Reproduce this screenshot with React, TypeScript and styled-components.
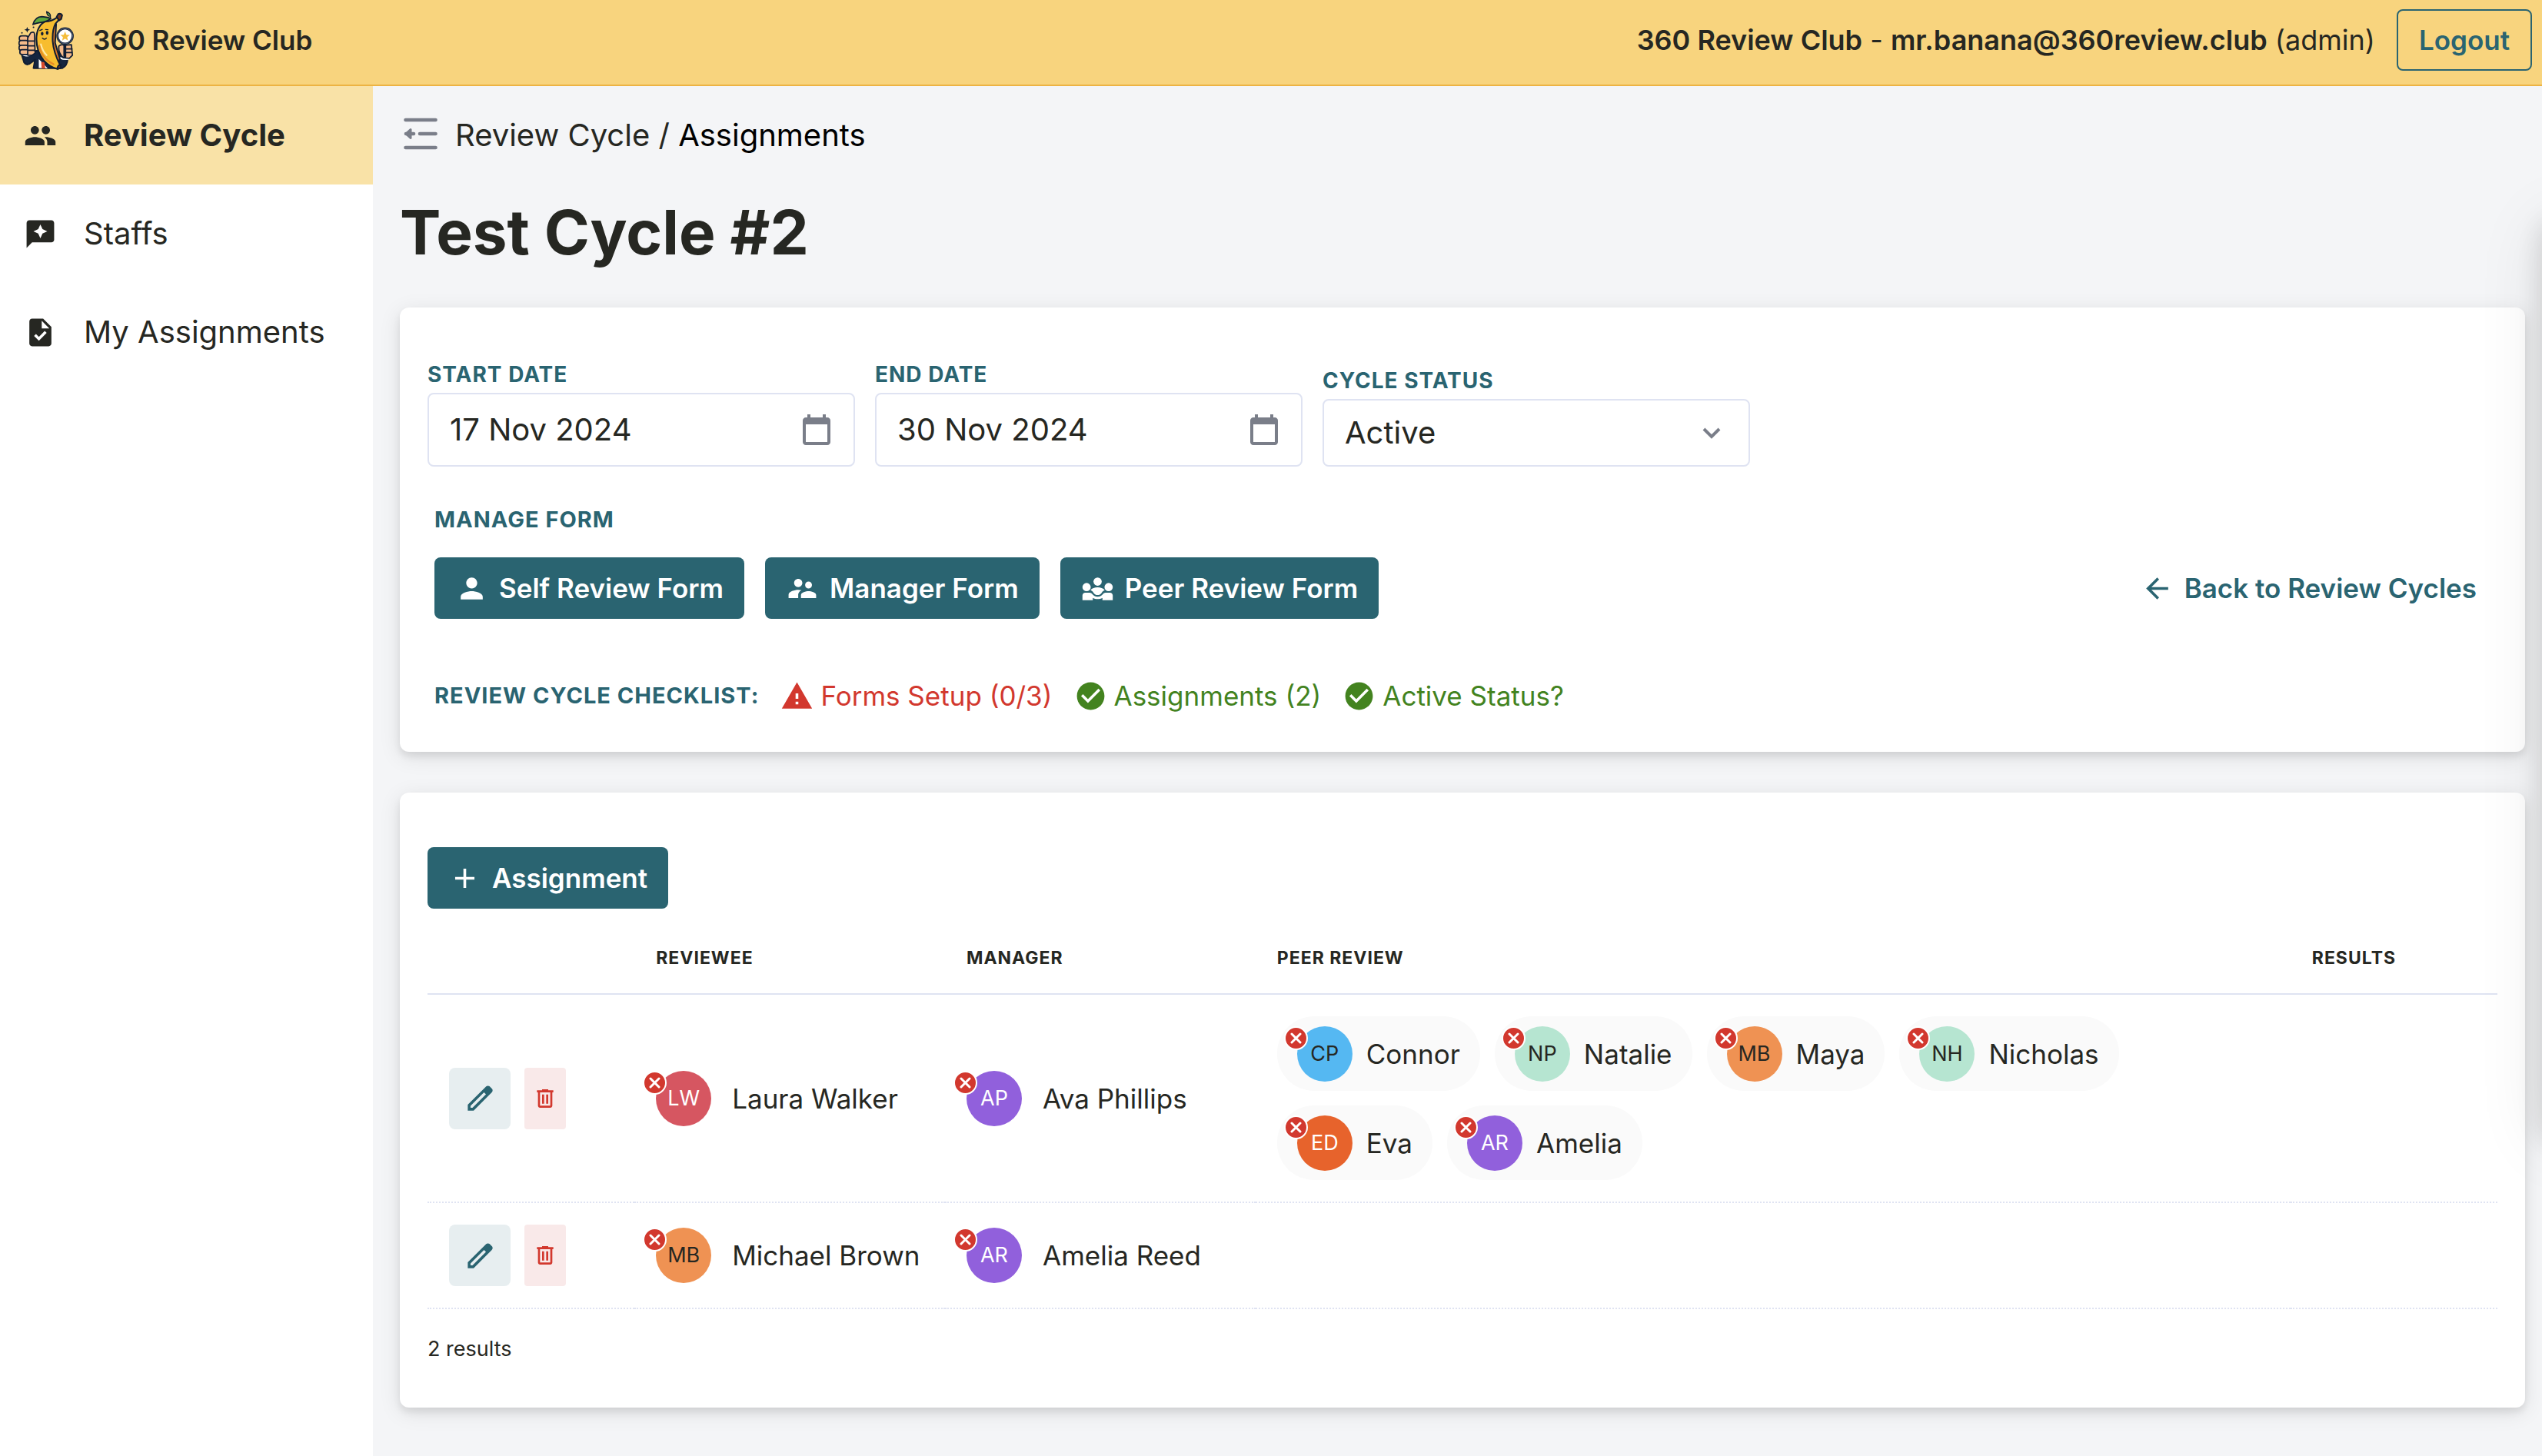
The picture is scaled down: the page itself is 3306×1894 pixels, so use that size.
import React, { useState } from "react";
import styled, { createGlobalStyle } from "styled-components";
import {
  MdPeople,
  MdReviews,
  MdTask,
  MdPerson,
  MdSupervisorAccount,
  MdArrowBack,
  MdAdd,
  MdWarning,
  MdCheckCircle,
} from "react-icons/md";

const color = {
  ink: "#262722",
  teal: "#2a6471",
  red: "#d2382e",
  green: "#43831f",
  line: "#dfe3f2",
  muted: "#7a7e89",
};

const GlobalStyle = createGlobalStyle`
  *, *::before, *::after { box-sizing: border-box; }
  body {
    margin: 0;
    overflow-x: hidden;
    background: #f4f5f7;
    color: ${color.ink};
    font-family: Inter, "Liberation Sans", sans-serif;
    font-size: 35px;
    line-height: 54px;
  }
  button, input, select { font: inherit; color: inherit; }
  a { color: inherit; text-decoration: none; }
  svg { display: block; flex: none; }
`;

const Page = styled.div`
  display: flex;
  flex-direction: column;
  min-height: 100vh;
`;

const TopBar = styled.header`
  display: flex;
  align-items: center;
  justify-content: space-between;
  height: 112px;
  padding: 0 13px 6px 22px;
  background: #f8d47e;
  border-bottom: 2px solid #edb343;
`;

const Brand = styled.a`
  display: flex;
  align-items: center;
  gap: 23px;
  font-weight: 600;
`;

const Account = styled.div`
  display: flex;
  align-items: center;
  gap: 28px;
`;

const Identity = styled.span`
  font-size: 36px;
  b { font-weight: 600; }
`;

const LogoutButton = styled.button`
  height: 80px;
  padding: 0 27px;
  border: 2px solid ${color.teal};
  border-radius: 8px;
  background: transparent;
  color: ${color.teal};
  font-weight: 600;
`;

const Body = styled.div`
  display: flex;
  flex: 1;
`;

const Sidebar = styled.nav`
  flex: none;
  width: 485px;
  background: #fff;
`;

const NavItem = styled.a<{ $active?: boolean }>`
  display: flex;
  align-items: center;
  gap: 35px;
  height: 128px;
  padding-left: 31px;
  font-size: 40px;
  font-weight: ${(p) => (p.$active ? 700 : 400)};
  background: ${(p) => (p.$active ? "#f9e2a7" : "transparent")};
`;

const Content = styled.main`
  flex: 1;
  min-width: 0;
  padding: 36px 22px 0 35px;
`;

const Crumbs = styled.div`
  display: flex;
  align-items: center;
  gap: 22px;
  height: 56px;
  padding-left: 4px;
  font-size: 40px;
`;

const FoldButton = styled.button`
  padding: 0 0 4px;
  border: 0;
  background: none;
`;

const Current = styled.span`
  color: #000;
`;

const Title = styled.h1`
  margin: 50px 0;
  font-size: 80px;
  line-height: 96px;
  font-weight: 700;
`;

const Card = styled.section`
  margin-bottom: 53px;
  padding: 71px 36px 46px;
  background: #fff;
  border-radius: 12px;
  box-shadow: 0 6px 10px rgba(0, 0, 0, 0.08), 0 6px 28px rgba(0, 0, 0, 0.1);
`;

const Fields = styled.div`
  display: flex;
  align-items: flex-end;
  gap: 26px;
`;

const Field = styled.div`
  display: flex;
  flex-direction: column;
  gap: 8px;
  width: 556px;
`;

const Caption = styled.label`
  color: ${color.teal};
  font-size: 28px;
  line-height: 32px;
  font-weight: 700;
  letter-spacing: 1px;
  text-transform: uppercase;
`;

const SectionCaption = styled.div`
  color: ${color.teal};
  font-size: 29px;
  line-height: 32px;
  font-weight: 700;
  letter-spacing: 1px;
  text-transform: uppercase;
`;

const Control = styled.div<{ $height: number }>`
  display: flex;
  align-items: center;
  height: ${(p) => p.$height}px;
  padding-right: 24px;
  border: 2px solid ${color.line};
  border-radius: 8px;
  background: #fff;
  color: ${color.muted};
  font-size: 40px;
`;

const DateInput = styled.input`
  flex: 1;
  min-width: 0;
  padding: 0 0 0 27px;
  border: 0;
  outline: 0;
  background: transparent;
  color: ${color.ink};
`;

const PickerButton = styled.button`
  padding: 0;
  border: 0;
  background: none;
`;

const StatusSelect = styled.select`
  flex: 1;
  height: 100%;
  padding: 0 0 0 27px;
  border: 0;
  outline: 0;
  appearance: none;
  background: transparent;
  color: ${color.ink};
`;

const Manage = styled.div`
  display: flex;
  flex-direction: column;
  gap: 33px;
  margin: 53px 0 73px;
  padding-left: 9px;
`;

const ButtonRow = styled.div`
  display: flex;
  align-items: center;
  gap: 27px;
`;

const Button = styled.button`
  display: inline-flex;
  align-items: center;
  gap: 14px;
  height: 80px;
  padding: 0 27px;
  border: 0;
  border-radius: 8px;
  background: ${color.teal};
  color: #fff;
  font-weight: 600;
  white-space: nowrap;
`;

const BackLink = styled.a`
  display: flex;
  align-items: center;
  gap: 14px;
  margin-left: auto;
  padding: 0 27px;
  color: ${color.teal};
  font-weight: 600;
`;

const Checklist = styled.div`
  display: flex;
  align-items: center;
  gap: 28px;
  padding-left: 9px;
`;

const Check = styled.span<{ $ok?: boolean }>`
  display: flex;
  align-items: center;
  gap: 9px;
  color: ${(p) => (p.$ok ? color.green : color.red)};
`;

const Table = styled.table`
  width: 100%;
  margin-top: 18px;
  table-layout: fixed;
  border-collapse: separate;
  border-spacing: 0;
`;

const HeadCell = styled.th<{ $width: number }>`
  width: ${(p) => p.$width}%;
  height: 94px;
  padding: 0 28px;
  border-bottom: 2px solid ${color.line};
  font-size: 23px;
  line-height: 32px;
  font-weight: 700;
  letter-spacing: 1px;
  text-align: left;
  text-transform: uppercase;
`;

const Cell = styled.td`
  padding: 28px;
  border-bottom: 2px dotted ${color.line};
  white-space: nowrap;
`;

const Actions = styled.div`
  display: flex;
  gap: 18px;
`;

const EditButton = styled.button`
  display: grid;
  place-items: center;
  width: 80px;
  height: 80px;
  padding: 0;
  border: 0;
  border-radius: 8px;
  background: #e7eef0;
  color: ${color.teal};
`;

const DeleteButton = styled(EditButton)`
  width: 54px;
  border-radius: 4px;
  background: #f9e9e9;
  color: ${color.red};
`;

const Person = styled.div<{ $chip?: boolean }>`
  display: flex;
  align-items: center;
  gap: ${(p) => (p.$chip ? 18 : 27)}px;
  height: ${(p) => (p.$chip ? "97px" : "72px")};
  padding: ${(p) => (p.$chip ? "0 26px" : "0")};
  border-radius: 48px;
  background: ${(p) => (p.$chip ? "#fafafa" : "transparent")};
`;

const Avatar = styled.span<{ $bg: string; $dark?: boolean }>`
  position: relative;
  display: grid;
  place-items: center;
  flex: none;
  width: 72px;
  height: 72px;
  border-radius: 50%;
  background: ${(p) => p.$bg};
  color: ${(p) => (p.$dark ? color.ink : "#fff")};
  font-size: 27px;
  line-height: 32px;
`;

const Badge = styled.span`
  position: absolute;
  top: 0;
  left: -17px;
  display: grid;
  place-items: center;
  width: 31px;
  height: 31px;
  border: 2px solid #fff;
  border-radius: 50%;
  background: ${color.red};
  color: #fff;
`;

const Chips = styled.div`
  display: flex;
  flex-wrap: wrap;
  gap: 19px;
`;

const Footer = styled.p`
  margin: 32px 0 10px;
  font-size: 27px;
  line-height: 40px;
`;

const Drawer = styled.aside`
  position: fixed;
  top: 290px;
  bottom: 410px;
  left: 100%;
  width: 600px;
  box-shadow: 0 0 36px rgba(0, 0, 0, 0.14), 0 0 84px rgba(0, 0, 0, 0.09);
  pointer-events: none;
`;

const ICON = 43;

const CalendarIcon = () => (
  <svg width="48" height="48" viewBox="0 -960 960 960" fill="currentColor" aria-hidden>
    <path d="M200-80q-33 0-56.5-23.5T120-160v-560q0-33 23.5-56.5T200-800h40v-80h80v80h320v-80h80v80h40q33 0 56.5 23.5T840-720v560q0 33-23.5 56.5T760-80H200Zm0-80h560v-460H200v460Z" />
  </svg>
);

const ChevronIcon = () => (
  <svg width="48" height="40" viewBox="0 0 48 40" fill="none" stroke="currentColor" strokeWidth="4" aria-hidden>
    <path d="M14 15l10 10 10-10" />
  </svg>
);

const FoldIcon = () => (
  <svg width="46" height="42" viewBox="0 0 46 42" fill="none" stroke={color.muted} strokeWidth="4.6" strokeLinecap="round" aria-hidden>
    <path d="M3.500 3H42.500M22 21H42.500M3.500 39H42.500" />
    <path d="M4 21H14" />
    <path d="M10 15.500L4 21l6 5.500z" fill={color.muted} strokeWidth="3" strokeLinejoin="round" />
  </svg>
);

const PencilIcon = () => (
  <svg width={ICON} height={ICON} viewBox="0 -960 960 960" fill="currentColor" aria-hidden>
    <path d="M200-200h57l391-391-57-57-391 391v57Zm-80 80v-170l528-527q12-11 26.500-17t30.500-6q16 0 31 6t26 18l55 56q12 11 17.500 26t5.500 30q0 16-5.500 30.500T817-647L290-120H120Z" />
  </svg>
);

const TrashIcon = () => (
  <svg width="32" height="32" viewBox="0 -960 960 960" fill="currentColor" aria-hidden>
    <path d="M280-120q-33 0-56.500-23.500T200-200v-520h-40v-80h200v-40h240v40h200v80h-40v520q0 33-23.500 56.500T680-120H280Zm400-600H280v520h400v-520ZM360-280h80v-360h-80v360Zm160 0h80v-360h-80v360Z" />
  </svg>
);

const PeersIcon = () => (
  <svg width={ICON} height={ICON} viewBox="0 0 24 24" fill="currentColor" aria-hidden>
    <circle cx="12" cy="7" r="3" />
    <circle cx="4" cy="11" r="3" />
    <circle cx="20" cy="11" r="3" />
    <path d="M12 11.200c-2.200 0-4.100.8-5.200 2 1 .3 1.700 1 2.100 1.700.7 1.200 1.800 1.900 3.100 1.900s2.400-.7 3.100-1.900c.4-.7 1.100-1.400 2.100-1.700-1.100-1.200-3-2-5.200-2z" />
    <path d="M1 17c0-1.100.9-2 2-2h3.300c.7 0 1.300.4 1.700.9.900 1.300 2.300 2.100 4 2.100s3.100-.8 4-2.100c.4-.5 1-.9 1.700-.9H21c1.100 0 2 .9 2 2v3.500h-7.500v-1.700c-1.100.6-2.300.9-3.500.9s-2.400-.3-3.500-.9v1.700H1z" />
  </svg>
);

const Logo = () => (
  <svg width="76" height="78" viewBox="64 40 220 228" strokeLinejoin="round" strokeLinecap="round" aria-hidden>
    <g stroke="#101d33" strokeWidth="6">
      <path d="M80 205l10 34q8 12 20 6l22-16-6 32h110q18-8 20-36l-60-40z" fill="#14253f" />
      <path d="M146 226l34 36-34-1z" fill="#fff" stroke="none" />
      <path d="M155 238l12 0 4 24h-14z" fill="#d84a2b" stroke="none" />
      <path d="M78 204q14 14 34 8" fill="none" stroke="#fff" />
      <path d="M228 222q14 8 30 4" fill="none" stroke="#fff" />
      <g fill="#f4b98a" strokeWidth="5">
        <rect x="72" y="138" width="34" height="20" rx="9" />
        <rect x="71" y="156" width="36" height="20" rx="9" />
        <rect x="71" y="174" width="36" height="20" rx="9" />
        <rect x="74" y="191" width="34" height="18" rx="8" />
        <path d="M104 212V146l12-20q14-6 14 8l2 70-12 8z" />
        <path d="M106 158h22M106 176h24M107 193h24" fill="none" />
      </g>
      <path d="M200 95q-14 55 6 110l16 40 4-20-18-60 4-70z" fill="#df7a25" />
      <path d="M216 68q-22 16-46 16-32 16-33 66 1 50 28 82 24 26 54 33l9-14q-26-50-29-92-2-44 10-66 8-12 22-22z" fill="#f7bd2f" />
      <path d="M148 176q8 48 54 70" fill="none" stroke="#e78b26" strokeWidth="7" />
      <path d="M154 170q6 26 22 42" fill="none" stroke="#ffe9a8" />
      <path d="M214 66l6-11q10-3 15 5l-4 15-8 5z" fill="#7a3a1c" />
      <path d="M216 262l4-10 10-4-2 14z" fill="#7a3a1c" />
      <path d="M124 95q8-30 34-30 24 2 34 8-20 14-42 15-14 2-26 7z" fill="#5fa83c" strokeWidth="5" />
      <path d="M190 70q4-18-14-24 0 14 10 18" fill="#5fa83c" strokeWidth="4" />
    </g>
    <g fill="#101d33">
      <ellipse cx="159" cy="130" rx="5" ry="7" />
      <ellipse cx="178" cy="127" rx="5" ry="7" />
      <path d="M102 104l3 8 8 3-8 3-3 8-3-8-8-3 8-3z" />
      <circle cx="82" cy="127" r="3" />
      <circle cx="126" cy="106" r="3" />
    </g>
    <path d="M160 147q8 8 15 0M150 118l9-4M172 114l9 1" fill="none" stroke="#101d33" strokeWidth="4" />
    <g stroke="#101d33">
      <path d="M222 178q10-10 20-4l28-2 4 40-12 12-22-2q-20-16-18-44z" fill="#f4b98a" strokeWidth="5" />
      <path d="M252 188h20M252 202h20" strokeWidth="5" />
      <path d="M245 172v46" strokeWidth="11" />
      <circle cx="246" cy="139" r="29" fill="#fff" strokeWidth="8" />
      <circle cx="246" cy="139" r="29" fill="none" stroke="#70809b" strokeWidth="2" />
    </g>
    <path d="M246 122l5 12 13 1-10 8 3 13-11-7-11 7 3-13-10-8 13-1z" fill="#f5bd3a" />
  </svg>
);

type Who = { initials: string; name: string; bg: string; dark?: boolean };

const purple = "#9160dc";
const orange = "#ef9253";
const mint = "#b6e5d1";

const rows: { reviewee: Who; manager: Who; peers: Who[] }[] = [
  {
    reviewee: { initials: "LW", name: "Laura Walker", bg: "#d65661" },
    manager: { initials: "AP", name: "Ava Phillips", bg: purple },
    peers: [
      { initials: "CP", name: "Connor", bg: "#55b8f2", dark: true },
      { initials: "NP", name: "Natalie", bg: mint, dark: true },
      { initials: "MB", name: "Maya", bg: orange, dark: true },
      { initials: "NH", name: "Nicholas", bg: mint, dark: true },
      { initials: "ED", name: "Eva", bg: "#e7632c" },
      { initials: "AR", name: "Amelia", bg: purple },
    ],
  },
  {
    reviewee: { initials: "MB", name: "Michael Brown", bg: orange, dark: true },
    manager: { initials: "AR", name: "Amelia Reed", bg: purple },
    peers: [],
  },
];

const PersonTag = ({ who, chip }: { who: Who; chip?: boolean }) => (
  <Person $chip={chip}>
    <Avatar $bg={who.bg} $dark={who.dark}>
      {who.initials}
      <Badge>
        <svg width="15" height="15" viewBox="0 0 15 15" stroke="currentColor" strokeWidth="3" strokeLinecap="round" aria-hidden>
          <path d="M2 2l11 11M13 2L2 13" />
        </svg>
      </Badge>
    </Avatar>
    {who.name}
  </Person>
);

const DateField = ({ id, label, initial }: { id: string; label: string; initial: string }) => {
  const [value, setValue] = useState(initial);
  return (
    <Field>
      <Caption htmlFor={id}>{label}</Caption>
      <Control $height={96}>
        <DateInput id={id} value={value} onChange={(e) => setValue(e.target.value)} />
        <PickerButton type="button" aria-label={`Pick ${label}`}>
          <CalendarIcon />
        </PickerButton>
      </Control>
    </Field>
  );
};

export default function App() {
  return (
    <Page>
      <GlobalStyle />
      <TopBar>
        <Brand href="#">
          <Logo />
          360 Review Club
        </Brand>
        <Account>
          <Identity>
            <b>360 Review Club</b> - <b>mr.banana@360review.club</b> (admin)
          </Identity>
          <LogoutButton type="button">Logout</LogoutButton>
        </Account>
      </TopBar>
      <Body>
        <Sidebar>
          <NavItem href="#cycle" $active>
            <MdPeople size={ICON} />
            Review Cycle
          </NavItem>
          <NavItem href="#staffs">
            <MdReviews size={ICON} />
            Staffs
          </NavItem>
          <NavItem href="#assignments">
            <MdTask size={ICON} />
            My Assignments
          </NavItem>
        </Sidebar>
        <Content>
          <Crumbs>
            <FoldButton type="button" aria-label="Toggle sidebar">
              <FoldIcon />
            </FoldButton>
            <span>
              <a href="#cycle">Review Cycle</a> / <Current>Assignments</Current>
            </span>
          </Crumbs>
          <Title>Test Cycle #2</Title>
          <Card>
            <Fields>
              <DateField id="start" label="Start date" initial="17 Nov 2024" />
              <DateField id="end" label="End date" initial="30 Nov 2024" />
              <Field>
                <Caption htmlFor="status">Cycle status</Caption>
                <Control $height={88}>
                  <StatusSelect id="status" defaultValue="Active">
                    <option>Active</option>
                  </StatusSelect>
                  <ChevronIcon />
                </Control>
              </Field>
            </Fields>
            <Manage>
              <SectionCaption>Manage form</SectionCaption>
              <ButtonRow>
                <Button type="button">
                  <MdPerson size={ICON} />
                  Self Review Form
                </Button>
                <Button type="button">
                  <MdSupervisorAccount size={ICON} />
                  Manager Form
                </Button>
                <Button type="button">
                  <PeersIcon />
                  Peer Review Form
                </Button>
                <BackLink href="#cycles">
                  <MdArrowBack size={ICON} />
                  Back to Review Cycles
                </BackLink>
              </ButtonRow>
            </Manage>
            <Checklist>
              <SectionCaption>Review cycle checklist:</SectionCaption>
              <Check>
                <MdWarning size={ICON} />
                Forms Setup (0/3)
              </Check>
              <Check $ok>
                <MdCheckCircle size={ICON} />
                Assignments (2)
              </Check>
              <Check $ok>
                <MdCheckCircle size={ICON} />
                Active Status?
              </Check>
            </Checklist>
          </Card>
          <Card>
            <ButtonRow>
              <Button type="button">
                <MdAdd size={ICON} />
                Assignment
              </Button>
            </ButtonRow>
            <Table>
              <thead>
                <tr>
                  <HeadCell $width={10} />
                  <HeadCell $width={15}>Reviewee</HeadCell>
                  <HeadCell $width={15}>Manager</HeadCell>
                  <HeadCell $width={50}>Peer review</HeadCell>
                  <HeadCell $width={10}>Results</HeadCell>
                </tr>
              </thead>
              <tbody>
                {rows.map((row) => (
                  <tr key={row.reviewee.name}>
                    <Cell>
                      <Actions>
                        <EditButton type="button" aria-label="Edit">
                          <PencilIcon />
                        </EditButton>
                        <DeleteButton type="button" aria-label="Delete">
                          <TrashIcon />
                        </DeleteButton>
                      </Actions>
                    </Cell>
                    <Cell>
                      <PersonTag who={row.reviewee} />
                    </Cell>
                    <Cell>
                      <PersonTag who={row.manager} />
                    </Cell>
                    <Cell>
                      <Chips>
                        {row.peers.map((p) => (
                          <PersonTag key={p.name} who={p} chip />
                        ))}
                      </Chips>
                    </Cell>
                    <Cell />
                  </tr>
                ))}
              </tbody>
            </Table>
            <Footer>2 results</Footer>
          </Card>
        </Content>
      </Body>
      <Drawer aria-hidden />
    </Page>
  );
}
